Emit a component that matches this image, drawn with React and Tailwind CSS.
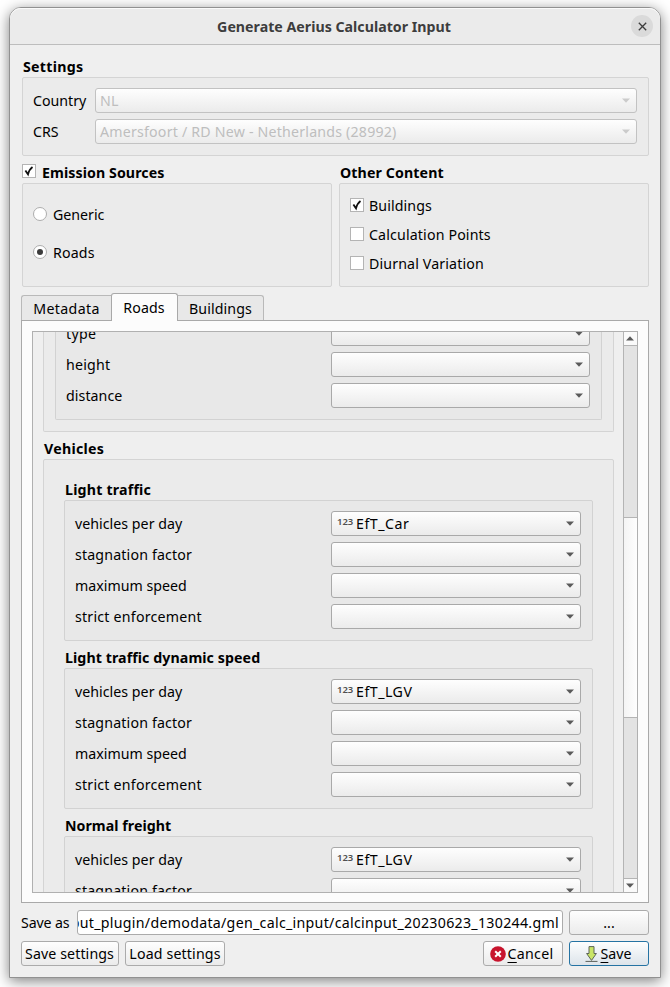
import React from "react";

const cx = (...parts) => parts.filter(Boolean).join(" ");

function Arrow({ up, className = "fill-[#5a5a5a]" }) {
  return (
    <svg width="8" height="5" viewBox="0 0 8 5" className={cx("shrink-0", className)}>
      {up ? <path d="M0 4.5 L4 0.3 L8 4.5 Z" /> : <path d="M0 0.5 L8 0.5 L4 4.7 Z" />}
    </svg>
  );
}

function Combo({ value, tracking, disabled, numeric, className }) {
  return (
    <div
      className={cx(
        "flex h-[25px] shrink-0 items-center rounded-[3px] border bg-linear-to-b from-[#fefefe] to-[#ebebeb] pr-[6.5px]",
        disabled ? "border-[#c2c2c2] pl-[4px] text-[#bebebe]" : "border-[#a9a9a9] pl-[5px]",
        className
      )}
    >
      {numeric && (
        <span className="mr-[3px] w-[16px] pb-[3px] text-[9.5px] leading-none font-semibold text-[#505050]">123</span>
      )}
      <span className={cx("grow", tracking)}>{value}</span>
      <Arrow className={disabled ? "fill-[#cbcbcb]" : "fill-[#5a5a5a]"} />
    </div>
  );
}

function CheckBox({ checked }) {
  return (
    <span className="flex size-[14px] shrink-0 items-center justify-center border border-[#b4b4b4] bg-white">
      {checked && (
        <svg width="12" height="12" viewBox="0 0 12 12" fill="none" stroke="#111" strokeWidth="1.8">
          <path d="M2.4 5.4 L5 9.4 C5.8 6.2 7 3.8 9.5 2" />
        </svg>
      )}
    </span>
  );
}

function Radio({ checked }) {
  return (
    <span className="flex size-[14px] shrink-0 items-center justify-center rounded-full border border-[#adadad] bg-white">
      {checked && <span className="size-[6px] rounded-full bg-[#3c3c3c]" />}
    </span>
  );
}

const Heading = ({ children, className }) => (
  <div className={cx("h-[20px] shrink-0 leading-[20px] font-bold", className)}>{children}</div>
);

function FieldRow({ label, tracking, width, value }) {
  return (
    <div className="flex h-[25px] items-center">
      <span className={cx("shrink-0", tracking, width)}>{label}</span>
      <Combo className="grow" value={value} tracking="tracking-[0.5px]" numeric={!!value} />
    </div>
  );
}

function VehicleGroup({ title, titleTracking, field }) {
  return (
    <>
      <Heading className={cx("pl-px", titleTracking)}>{title}</Heading>
      <div className="mb-[7px] flex flex-col gap-[6px] rounded-[2px] border border-[#d2d2d2] bg-[#e8e8e8] pt-[10px] pr-[11px] pb-[11px] pl-[10px]">
        <FieldRow label="vehicles per day" tracking="tracking-[0.03px]" width="w-[256px]" value={field} />
        <FieldRow label="stagnation factor" tracking="tracking-[0.16px]" width="w-[256px]" />
        <FieldRow label="maximum speed" tracking="tracking-[0px]" width="w-[256px]" />
        <FieldRow label="strict enforcement" tracking="tracking-[0.22px]" width="w-[256px]" />
      </div>
    </>
  );
}

const Button = ({ children, className }) => (
  <button
    className={cx(
      "flex h-[25px] shrink-0 items-center justify-center rounded-[3px] border bg-linear-to-b whitespace-nowrap",
      className
    )}
  >
    {children}
  </button>
);
const plain = "border-[#ababab] from-[#fefefe] to-[#ebebeb]";

const Mnemonic = ({ children }) => (
  <span className="underline decoration-1 underline-offset-[3px]">{children}</span>
);

function Header() {
  return (
    <div className="flex h-[37px] shrink-0 items-center rounded-t-[11px] border-b border-[#bdbdbd] bg-[#ebebeb] pr-[7px] pl-[27px] shadow-[inset_0_1px_0_#fafafa]">
      <div className="grow pt-px text-center font-bold tracking-[0.01px] text-[#3d3d3d]">Generate Aerius Calculator Input</div>
      <div className="flex size-[22px] items-center justify-center rounded-full bg-[#dadada]">
        <svg width="9" height="9" viewBox="0 0 9 9" stroke="#3d3d3d" strokeWidth="1.3">
          <path d="M0.8 0.8 L8.2 8.2 M8.2 0.8 L0.8 8.2" />
        </svg>
      </div>
    </div>
  );
}

function Settings() {
  return (
    <>
      <Heading className="pl-px tracking-[0.28px]">Settings</Heading>
      <div className="flex flex-col gap-[6px] rounded-[2px] border border-[#d4d4d4] bg-[#ebebeb] pt-[10px] pr-[11px] pb-[11px] pl-[10px]">
        <div className="flex items-center">
          <span className="w-[62px]">Country</span>
          <Combo className="grow" disabled value="NL" tracking="tracking-[0.22px]" />
        </div>
        <div className="flex items-center">
          <span className="w-[62px]">CRS</span>
          <Combo className="grow" disabled value="Amersfoort / RD New - Netherlands (28992)" tracking="tracking-[0.2px]" />
        </div>
      </div>
    </>
  );
}

function Sources() {
  const option = "flex h-[14px] items-center gap-[5px]";
  return (
    <div className="mt-[7px] grid grid-cols-[310px_310px] gap-x-[7px]">
      <div>
        <div className="flex h-[20px] items-start gap-[6px] pt-px">
          <CheckBox checked />
          <span className="-mt-px leading-[20px] font-bold tracking-[0.08px]">Emission Sources</span>
        </div>
        <div className="flex h-[104px] flex-col gap-[24px] rounded-[2px] border border-[#d4d4d4] bg-[#ebebeb] pt-[23px] pl-[10px]">
          <label className="flex h-[14px] items-center gap-[6px]"><Radio /><span className="pt-px">Generic</span></label>
          <label className="flex h-[14px] items-center gap-[6px]"><Radio checked /><span className="pt-px tracking-[0.15px]">Roads</span></label>
        </div>
      </div>
      <div>
        <Heading className="pl-px tracking-[0.11px]">Other Content</Heading>
        <div className="flex h-[104px] flex-col gap-[15px] rounded-[2px] border border-[#d4d4d4] bg-[#ebebeb] pt-[14px] pl-[10px]">
          <label className={option}><CheckBox checked /><span className="pt-px tracking-[0.1px]">Buildings</span></label>
          <label className={option}><CheckBox /><span className="pt-px tracking-[0.15px]">Calculation Points</span></label>
          <label className={option}><CheckBox /><span className="pt-px tracking-[0.14px]">Diurnal Variation</span></label>
        </div>
      </div>
    </div>
  );
}

function Tabs() {
  const idle = "flex h-[25px] items-center justify-center border-t border-[#b9b9b9] bg-[#e8e8e8]";
  return (
    <div className="mt-[6px] -ml-px flex h-[27px] items-end">
      <div className={cx(idle, "w-[90px] rounded-tl-[3px] border-l tracking-[0.36px]")}>Metadata</div>
      <div className="z-10 -mb-px flex h-[28px] w-[67px] items-center justify-center rounded-t-[3px] border border-b-0 border-[#a9a9a9] bg-[#fcfcfc] pr-px tracking-[0.15px]">
        Roads
      </div>
      <div className={cx(idle, "w-[86px] rounded-tr-[3px] border-r tracking-[0.1px]")}>Buildings</div>
    </div>
  );
}

function ScrollBar() {
  return (
    <div className="flex h-full w-[14px] shrink-0 flex-col border-l border-[#b4b4b4] bg-[#e3e3e3]">
      <div className="flex h-[14px] items-center justify-center border-b border-[#b4b4b4] bg-[#fafafa] pr-px">
        <Arrow up />
      </div>
      <div className="h-[171px]" />
      <div className="h-[201px] border-y border-[#b4b4b4] bg-linear-to-r from-[#f4f4f4] to-[#fefefe]" />
      <div className="grow" />
      <div className="flex h-[14px] items-center justify-center border-t border-[#b4b4b4] bg-[#fafafa] pr-px pb-px">
        <Arrow />
      </div>
    </div>
  );
}

function RoadsPanel() {
  return (
    <div className="-ml-px h-[583px] w-[628px] shrink-0 border border-[#a9a9a9] bg-[#fcfcfc] p-[10px]">
      <div className="flex h-[562px] overflow-hidden border border-[#b0b0b0] bg-[#efefef]">
        <div className="h-[560px] grow overflow-hidden pr-[9px] pl-[10px]">
          <div className="h-[100px] rounded-b-[2px] border border-t-0 border-[#d4d4d4] bg-[#ebebeb] px-[11px]">
            <div className="flex h-[88px] flex-col justify-end gap-[6px] rounded-b-[2px] border border-t-0 border-[#d2d2d2] bg-[#e8e8e8] pr-[11px] pb-[11px] pl-[10px]">
              <FieldRow label="type" tracking="tracking-[0.31px]" width="w-[265px]" />
              <FieldRow label="height" tracking="tracking-[0.2px]" width="w-[265px]" />
              <FieldRow label="distance" tracking="tracking-[0.07px]" width="w-[265px]" />
            </div>
          </div>
          <Heading className="mt-[7px] pl-px tracking-[0.26px]">Vehicles</Heading>
          <div className="rounded-[2px] border border-[#d4d4d4] bg-[#ebebeb] px-[20px] pt-[20px]">
            <VehicleGroup title="Light traffic" titleTracking="tracking-[0.2px]" field="EfT_Car" />
            <VehicleGroup title="Light traffic dynamic speed" titleTracking="tracking-[0.08px]" field="EfT_LGV" />
            <VehicleGroup title="Normal freight" titleTracking="tracking-[0.04px]" field="EfT_LGV" />
          </div>
        </div>
        <ScrollBar />
      </div>
    </div>
  );
}

function Footer() {
  return (
    <div className="-ml-px flex w-[628px] flex-col gap-[6px] pt-[7px]">
      <div className="flex items-center">
        <span className="w-[56px] tracking-[-0.15px]">Save as</span>
        <div className="mr-[6px] flex h-[25px] w-[486px] items-center justify-end overflow-hidden rounded-[3px] border border-[#ababab] bg-white pr-[3px]">
          <span className="tracking-[0.29px] whitespace-nowrap">put_plugin/demodata/gen_calc_input/calcinput_20230623_130244.gml</span>
        </div>
        <Button className={cx(plain, "w-[80px]")}>...</Button>
      </div>
      <div className="flex">
        <Button className={cx(plain, "mr-[6px] w-[98px] pr-px tracking-[0.1px]")}>Save settings</Button>
        <Button className={cx(plain, "w-[100px] tracking-[0.15px]")}>Load settings</Button>
        <div className="grow" />
        <Button className={cx(plain, "mr-[6px] w-[80px] gap-[2px] pr-[3px] tracking-[0.3px]")}>
          <svg width="16" height="16" viewBox="0 0 16 16">
            <circle cx="8" cy="8" r="7.8" fill="#c8142d" />
            <path d="M5.2 5.2 L10.8 10.8 M10.8 5.2 L5.2 10.8" stroke="#fff" strokeWidth="2" />
          </svg>
          <span><Mnemonic>C</Mnemonic>ancel</span>
        </Button>
        <Button className="w-[80px] gap-[3px] border-[#2573a3] from-[#fdfefe] to-[#dde4ea] pr-[2px]">
          <svg width="13" height="16" viewBox="0 0 13 16">
            <path d="M4 0.6 H9 V7.5 H11.4 L6.5 14.4 L1.6 7.5 H4 Z" fill="#c9e566" stroke="#5d6558" strokeWidth="1" />
            <path d="M0.5 15.4 H12.5" stroke="#5a5f5a" strokeWidth="1" />
          </svg>
          <span><Mnemonic>S</Mnemonic>ave</span>
        </Button>
      </div>
    </div>
  );
}

export default function App() {
  return (
    <div className="h-[987px] w-[670px] overflow-hidden bg-white pt-[7px] pl-[9px] font-['Noto_Sans',sans-serif] text-[14.2px] leading-[19px] text-black">
      <div className="flex h-[971px] w-[652px] flex-col rounded-t-[12px] border border-[#919191] bg-[#efefef] shadow-[0_3px_14px_rgba(0,0,0,0.5)]">
        <Header />
        <div className="flex flex-col pt-[12px] pr-[11px] pl-[12px]">
          <Settings />
          <Sources />
          <Tabs />
          <RoadsPanel />
          <Footer />
        </div>
      </div>
    </div>
  );
}
